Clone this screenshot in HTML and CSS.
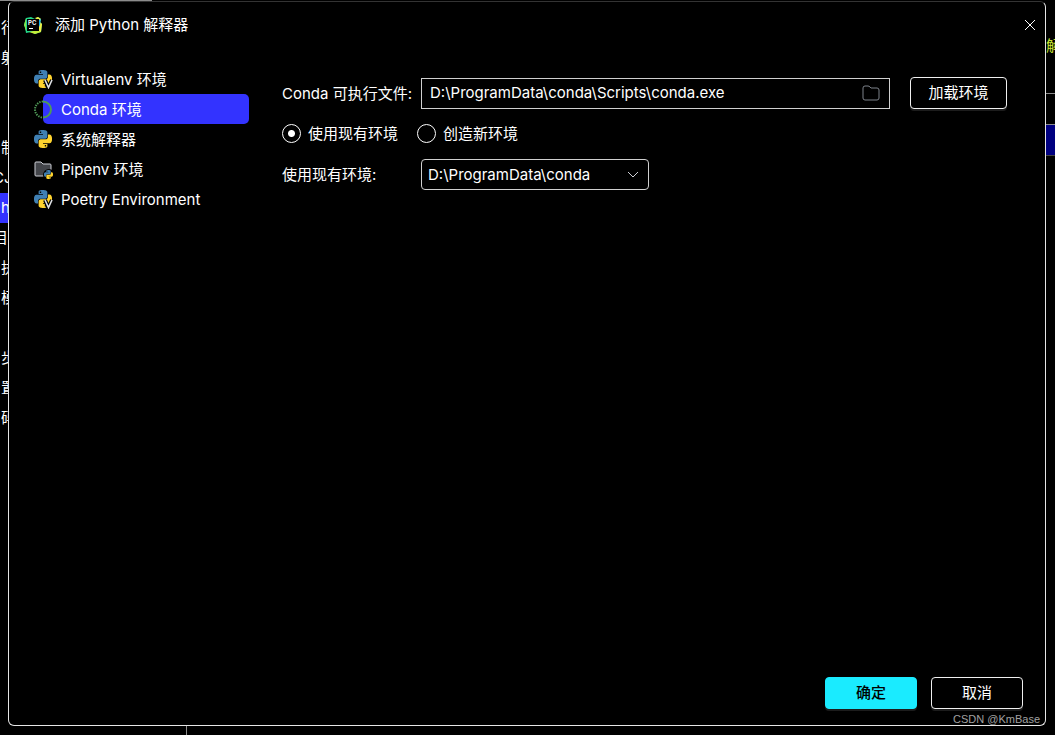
FILE: index.html
```html
<!DOCTYPE html>
<html lang="zh-CN">
    <head>
        <meta charset="utf-8"/>
        <meta name="viewport" content="width=device-width, initial-scale=1.0"/>
        <title>添加 Python 解释器</title>
        <link rel="stylesheet" href="styles.css">
    </head>
    <body>
        <svg class="symbols" aria-hidden="true">
            <symbol id="snake" viewBox="0 0 24 24">
                <path fill-rule="evenodd" d="M14.25.18l.9.2.73.26.59.3.45.32.34.34.25.34.16.33.1.3.04.26.02.2-.01.13V8.5l-.05.63-.13.55-.21.46-.26.38-.3.31-.33.25-.35.19-.35.14-.33.1-.3.07-.26.04-.21.02H8.77l-.69.05-.59.14-.5.22-.41.27-.33.32-.27.35-.2.36-.15.37-.1.35-.07.32-.04.27-.02.21v3.06H3.17l-.21-.03-.28-.07-.32-.12-.35-.18-.36-.26-.36-.36-.35-.46-.32-.59-.28-.73-.21-.88-.14-1.05-.05-1.23.06-1.22.16-1.04.24-.87.32-.71.36-.57.4-.44.42-.33.42-.24.4-.16.36-.1.32-.05.24-.01h.16l.06.01h8.16v-.83H6.18l-.01-2.75-.02-.37.05-.34.11-.31.17-.28.25-.26.31-.23.38-.2.44-.18.51-.15.58-.12.64-.1.71-.06.77-.04.84-.02 1.27.05zm-6.3 1.98l-.23.33-.08.41.08.41.23.34.33.22.41.09.41-.09.33-.22.23-.34.08-.41-.08-.41-.23-.33-.33-.22-.41-.09-.41.09z"/>
            </symbol>
            <symbol id="python" viewBox="0 0 24 24">
                <use href="#snake" width="24" height="24" fill="#4080b3"/>
                <use href="#snake" width="24" height="24" fill="#ffd42f" transform="rotate(180 12 12)"/>
            </symbol>
            <symbol id="virtualenv" viewBox="0 0 19 19">
                <use href="#python" width="18" height="18"/>
                <path d="M11 10L14.500 18L18 10" fill="none" stroke="#000" stroke-width="4"/>
                <path d="M11 10L14.500 17.500L18 10" fill="none" stroke="#dfe1e5" stroke-width="1.600"/>
            </symbol>
        </svg>

        <div class="edgeTop"></div>

        <ul class="behindLeft" aria-hidden="true">
            <li>行</li>
            <li>射</li>
            <li></li>
            <li></li>
            <li>制</li>
            <li class="shifted">CJ</li>
            <li class="current">h</li>
            <li class="shifted">目:</li>
            <li>执</li>
            <li>模</li>
            <li></li>
            <li>步</li>
            <li>置</li>
            <li>码</li>
        </ul>

        <main class="dialog">
            <header>
                <svg class="logo" width="18" height="18" viewBox="0 0 18 18">
                    <path d="M2 2L7 1L11 3L14 1L17 3L16 6L18 8L17 16L11 18L7 16L2 17L1 11L0 9Z" fill="#21d789"/>
                    <path d="M11 2L14 1L17 3L16 6L18 8L17 16L14 15V4Z" fill="#f4ed43"/>
                    <path d="M15 4L17 3L16 9L15 11Z" fill="#12b5ea"/>
                    <path d="M0 9L2 2V15Z" fill="#87e34b"/>
                    <path d="M5 16L11 18L17 16L14 14Z" fill="#c6ec38"/>
                    <rect x="3" y="3" width="12" height="12"/>
                    <text x="4" y="9">PC</text>
                    <path d="M5 12.500H9" stroke="#fff"/>
                </svg>
                <h1>添加 Python 解释器</h1>
                <button class="close" aria-label="关闭">
                    <svg width="12" height="12" viewBox="0 0 12 12"><path d="M1 1L11 11M11 1L1 11" stroke="#fff" fill="none"/></svg>
                </button>
            </header>

            <div class="content">
                <nav>
                    <a href="#virtualenv">
                        <svg width="19" height="19"><use href="#virtualenv"/></svg>
                        <span>Virtualenv 环境</span>
                    </a>
                    <a href="#conda" class="selected">
                        <svg width="19" height="19" viewBox="0 0 19 19" fill="none" stroke="#4f9b57" stroke-width="2">
                            <path d="M9 1.500A8 8 0 0 1 9 17.500"/>
                            <path d="M9 1.500A8 8 0 0 0 9 17.500" stroke-dasharray="1.400 1.100"/>
                        </svg>
                        <span>Conda 环境</span>
                    </a>
                    <a href="#system">
                        <svg width="19" height="19" viewBox="0 0 19 19"><use href="#python" width="18" height="18"/></svg>
                        <span>系统解释器</span>
                    </a>
                    <a href="#pipenv">
                        <svg width="19" height="19" viewBox="0 0 19 19">
                            <path d="M1 3Q1 2 2 2H7L9 4H16Q17 4 17 5V16H2Q1 16 1 15Z" fill="#43454a" stroke="#ced0d6"/>
                            <circle cx="15" cy="15" r="6"/>
                            <use href="#python" x="10" y="10" width="9" height="9"/>
                        </svg>
                        <span>Pipenv 环境</span>
                    </a>
                    <a href="#poetry">
                        <svg width="19" height="19"><use href="#virtualenv"/></svg>
                        <span>Poetry Environment</span>
                    </a>
                </nav>

                <form id="condaForm">
                    <div class="row">
                        <label class="name" for="executable">Conda 可执行文件:</label>
                        <div class="path">
                            <input id="executable" type="text" value="D:\ProgramData\conda\Scripts\conda.exe">
                            <button type="button" class="browse" aria-label="浏览">
                                <svg width="18" height="16" viewBox="0 0 18 16"><path d="M1 3Q1 1 3 1H6Q7 1 8 2L9 3H15Q17 3 17 5V13Q17 15 15 15H3Q1 15 1 13Z" fill="none" stroke="#7d828a"/></svg>
                            </button>
                        </div>
                        <button type="button" class="load">加载环境</button>
                    </div>

                    <div class="row radios">
                        <label><input type="radio" name="env" checked>使用现有环境</label>
                        <label><input type="radio" name="env">创造新环境</label>
                    </div>

                    <div class="row">
                        <label class="name" for="existing">使用现有环境:</label>
                        <div class="combo">
                            <select id="existing">
                                <option>D:\ProgramData\conda</option>
                            </select>
                            <svg width="12" height="8" viewBox="0 0 12 8"><path d="M1 1L6 6L11 1" fill="none" stroke="#ced0d6"/></svg>
                        </div>
                    </div>
                </form>
            </div>

            <footer>
                <button type="submit" form="condaForm" class="ok">确定</button>
                <button type="button">取消</button>
            </footer>

            <span class="watermark">CSDN @KmBase</span>
        </main>

        <div class="behindRight" aria-hidden="true">
            <span>解</span>
            <div class="line"></div>
            <div class="cell"></div>
        </div>

        <div class="edgeBottom"></div>
    </body>
</html>
```
FILE: styles.css
```css
*{margin:0;padding:0;box-sizing:border-box;}

body{
    display: grid;
    grid-template-columns: 8px minmax(0, 1fr) 9px;
    grid-template-rows: 1px 1fr 9px;
    min-height: 100vh;
    background: black;
    color: white;
    font-family: Inter, "Noto Sans CJK SC", sans-serif;
    font-size: 15px;
    font-optical-sizing: none;
    line-height: 30px;
}

.symbols{
    position: absolute;
    width: 0;
    height: 0;
}

/* the window behind the dialog */
.edgeTop{
    grid-column: 1 / -1;
    width: 152px;
    background: #8c8c8c;
}

.edgeBottom{
    grid-column: 1 / -1;
    width: 187px;
    border-right: 1px solid #8c8c8c;
}

.behindLeft{
    padding-top: 12px;
    overflow: hidden;
    list-style: none;
}

.behindLeft li{
    height: 30px;
    padding-left: 1px;
    white-space: nowrap;
}

.behindLeft .shifted{
    margin-left: -8px;
}

.behindLeft .current{
    background: #3333ff;
}

.behindRight{
    overflow: hidden;
}

.behindRight span{
    display: block;
    padding-top: 30px;
    height: 92px;
    color: #c8e632;
}

.line{
    height: 31px;
    border-top: 1px solid #8c8c8c;
}

.cell{
    height: 32px;
    border-top: 1px solid #8c8c8c;
    border-bottom: 1px solid #444444;
    background: #000080;
}

.dialog{
    position: relative;
    display: flex;
    flex-direction: column;
    border: 1px solid #e6e6e6;
    border-top-color: #333333;
    border-radius: 6px;
}

header{
    display: flex;
    align-items: center;
    height: 46px;
    padding: 0 9px 0 15px;
}

.logo text{
    font-size: 6px;
    font-weight: 700;
    fill: white;
}

h1{
    flex: 1;
    margin-left: 13px;
    font-size: 15px;
    font-weight: 400;
}

button{
    height: 32px;
    border: 1px solid #f0f0f0;
    border-radius: 4px;
    background: black;
    box-shadow: 0 2px 0 #1c1c1c;
    font: inherit;
    color: white;
}

.close, .browse{
    display: flex;
    align-items: center;
    justify-content: center;
    width: 12px;
    border: none;
    background: none;
    box-shadow: none;
}

.content{
    display: flex;
    flex: 1;
    padding: 16px 38px 0 25px;
}

nav{
    width: 215px;
    margin-right: 33px;
}

nav a{
    display: flex;
    align-items: center;
    height: 30px;
    color: white;
    text-decoration: none;
}

nav svg{
    flex: none;
    margin-right: 8px;
}

nav span, .name{
    padding-top: 2px;
}

nav .selected{
    margin-left: 9px;
    border-radius: 5px;
    background: #3333ff;
}

nav .selected svg{
    margin-left: -9px;
}

form{
    flex: 1;
    padding-top: 13px;
}

.row{
    display: flex;
    align-items: center;
    height: 32px;
}

.name{
    width: 139px;
    white-space: nowrap;
}

.path{
    display: flex;
    align-items: center;
    flex: 1;
    height: 31px;
    margin-right: 20px;
    padding: 0 9px 0 8px;
    border: 1px solid #d0d0d0;
}

.path input{
    flex: 1;
    min-width: 0;
    border: none;
    outline: none;
    background: none;
    font: inherit;
    color: white;
}

.path .browse{
    width: 18px;
}

.load{
    width: 97px;
}

.radios{
    height: 49px;
}

.radios label{
    display: flex;
    align-items: center;
    margin-right: 19px;
}

.radios input{
    appearance: none;
    width: 19px;
    height: 19px;
    margin-right: 7px;
    border: 1px solid white;
    border-radius: 50%;
}

.radios input:checked{
    background: radial-gradient(circle, white 3px, transparent 4px);
}

.combo{
    position: relative;
    width: 228px;
}

select{
    display: block;
    appearance: none;
    width: 100%;
    height: 31px;
    padding: 0 30px 0 6px;
    border: 1px solid #d0d0d0;
    border-radius: 4px;
    background: black;
    font: inherit;
    color: white;
}

.combo svg{
    position: absolute;
    top: 12px;
    right: 10px;
    pointer-events: none;
}

footer{
    display: flex;
    justify-content: flex-end;
    gap: 14px;
    padding: 0 22px 16px;
}

footer button{
    width: 92px;
}

footer .ok{
    border-color: #1aebff;
    background: #1aebff;
    font-weight: 500;
    color: black;
}

.watermark{
    position: absolute;
    right: 5px;
    bottom: -1px;
    font-family: "Liberation Sans", Arial, sans-serif;
    font-size: 11px;
    line-height: 13px;
    color: #a0a0a0;
}
```
